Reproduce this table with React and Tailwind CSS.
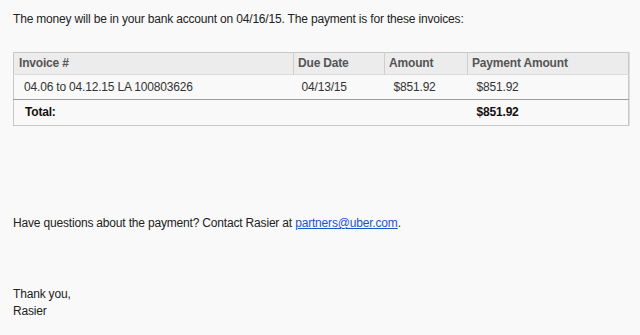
import React from "react";

const rows = [
  { invoice: "04.06 to 04.12.15 LA 100803626", due: "04/13/15", amount: "$851.92", payment: "$851.92" },
];

export default function App() {
  return (
    <div className="w-[640px] h-[335px] bg-[#f9f9f9] text-[#222] text-[12px] leading-[15px] tracking-[-0.18px] font-['Liberation_Sans',Arial,sans-serif] pl-[13px] pt-[12px] overflow-hidden">
      <p>The money will be in your bank account on 04/16/15. The payment is for these invoices:</p>

      <table className="mt-[25px] w-[615px] border-collapse table-fixed border border-[#c8c8c8] shadow-[1px_0_0_#dedede]">
        <colgroup>
          <col className="w-[280px]" />
          <col className="w-[91px]" />
          <col className="w-[83px]" />
          <col className="w-[161px]" />
        </colgroup>
        <thead>
          <tr className="bg-[#ececec] text-[#555] font-bold h-[22px] text-left">
            <th className="px-[5px] border-r border-[#cfcfcf]">Invoice #</th>
            <th className="px-[4px] border-r border-[#cfcfcf]">Due Date</th>
            <th className="px-[4px] border-r border-[#cfcfcf]">Amount</th>
            <th className="px-[4px]">Payment Amount</th>
          </tr>
        </thead>
        <tbody>
          {rows.map((r) => (
            <tr key={r.invoice} className="h-[25px] border-t border-[#dcdcdc] border-b border-b-[#9c9c9c] text-[#333]">
              <td className="pl-[10px]">{r.invoice}</td>
              <td className="pl-[8px]">{r.due}</td>
              <td className="pl-[9px]">{r.amount}</td>
              <td className="pl-[9px]">{r.payment}</td>
            </tr>
          ))}
          <tr className="h-[26px] font-bold text-[#111]">
            <td className="pl-[11px]">Total:</td>
            <td />
            <td />
            <td className="pl-[9px]">$851.92</td>
          </tr>
        </tbody>
      </table>

      <p className="mt-[90px]">
        Have questions about the payment? Contact Rasier at{" "}
        <a href="mailto:partners@uber.com" className="text-[#1a55c8] underline">partners@uber.com</a>.
      </p>

      <p className="mt-[56px]">Thank you,</p>
      <p className="mt-[2px]">Rasier</p>
    </div>
  );
}
